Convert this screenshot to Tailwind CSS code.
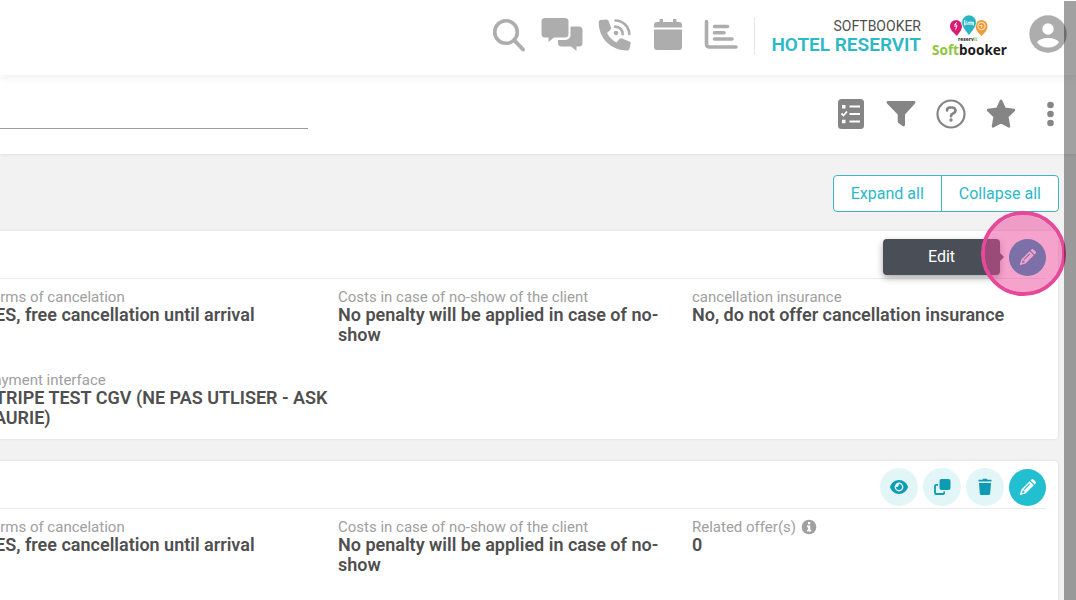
<!DOCTYPE html>
<html lang="en">
<head>
  <meta charset="UTF-8" />
  <meta name="viewport" content="width=device-width, initial-scale=1.0" />
  <title>Softbooker - Hotel Reservit</title>
  <script src="https://cdn.jsdelivr.net/npm/@tailwindcss/browser@4"></script>
</head>
<body class="relative h-screen overflow-hidden bg-[#f2f2f2] font-['Roboto',sans-serif] text-[#4f4f4f]">

  <!-- Icons used more than once -->
  <svg class="hidden">
    <symbol id="pencil" viewBox="0 0 20 20">
      <path fill="currentColor" fill-rule="evenodd" d="M12.3 3.4 3.6 12.1 2 17.4q-.2.8.6.6l5.300-1.600 8.700-8.700zM5 13l1.500.4.5 1.700-2.800.9zM12 5.900l.8.8-6 6-.8-.8zM13.200 2.500l1-1q1-.9 2 0l2.300 2.300q.9 1 0 2l-1 1z" />
    </symbol>
  </svg>

  <header class="relative z-10 flex h-[75px] items-center justify-end bg-white pr-[9px] pb-[3px] shadow-[0_1px_10px_rgba(0,0,0,0.09)]">
    <nav class="flex text-[#adadad]">
      <button aria-label="Search" class="flex w-[53px] justify-center">
        <svg class="h-9 w-9" viewBox="0 0 36 36" fill="none" stroke="currentColor" stroke-linecap="round">
          <circle cx="15" cy="14" r="11.300" stroke-width="3.600" />
          <path d="M23.500 22.500 32 31.500" stroke-width="4" />
        </svg>
      </button>
      <button aria-label="Messages" class="flex w-[53px] justify-center">
        <svg class="h-9 w-[42px]" viewBox="0 0 42 36" fill="currentColor">
          <path d="M4 0H24a3.500 3.500 0 0 1 3.500 3.500V16a3.500 3.500 0 0 1-3.500 3.500H13L7.500 24V19.500H4A3.500 3.500 0 0 1 .5 16V3.500A3.500 3.500 0 0 1 4 0z" />
          <path d="M29.500 8.500H38a3.500 3.500 0 0 1 3.500 3.500V25a3.500 3.500 0 0 1-3.500 3.500H35.500V33L30 28.500H20.500A3.500 3.500 0 0 1 17 25V22H24.500a5 5 0 0 0 5-5z" />
        </svg>
      </button>
      <button aria-label="Calls" class="flex w-[53px] justify-center">
        <svg class="h-9 w-[34px]" viewBox="0 0 34 36" fill="currentColor">
          <path d="M2.300 2 8.500 1.500Q10 1.500 10.600 3L13 9.500Q13.500 11 12.300 12L9 15Q12 21 18.500 24.500L21.500 21Q22.500 20 24 20.500L31.500 23.500Q33 24.200 32.700 25.800L31.300 31Q30.800 32.500 29 32.500C13 32.500.5 20 .7 4Q.7 2.300 2.300 2z" />
          <circle cx="18" cy="15" r="2.300" />
          <path d="M17 8.600A7.500 7.500 0 0 1 24.700 16.300M17.500 2.500A14 14 0 0 1 31.300 16" fill="none" stroke="currentColor" stroke-width="2.600" stroke-linecap="round" />
        </svg>
      </button>
      <button aria-label="Calendar" class="flex w-[53px] justify-center">
        <svg class="h-9 w-[30px]" viewBox="0 0 30 36" fill="currentColor">
          <path d="M6.500 2q0-1 1-1H9q1 0 1 1V4H20V2q0-1 1-1h1.500q1 0 1 1V4H26q3 0 3 3v2.500H1V7q0-3 3-3h2.500zM1 11.500H29V29q0 3-3 3H4q-3 0-3-3z" />
        </svg>
      </button>
      <button aria-label="Statistics" class="flex w-[53px] justify-center">
        <svg class="h-9 w-[34px]" viewBox="0 0 34 36" fill="none" stroke="currentColor" stroke-width="3.600" stroke-linecap="round">
          <path d="M2.500 3.500V26q0 3 3 3H32M10.500 8.500H23.500M10.500 14.700H20M10.500 21H28" />
        </svg>
      </button>
    </nav>

    <div class="ml-[7px] h-[38px] w-px bg-[#e5e5e5]"></div>

    <div class="ml-4 text-right">
      <div class="text-[14px] leading-[18px]">SOFTBOOKER</div>
      <div class="text-[19px] leading-[20px] font-semibold text-[#2cb9c6]">HOTEL RESERVIT</div>
    </div>

    <a href="#" class="ml-[11px]" aria-label="Softbooker">
      <svg class="h-[44px] w-[76px]" viewBox="0 0 76 44">
        <path fill="#d81b73" d="M24 6a6 6 0 0 1 6 6c0 4-3 7-5 10-3-3-7-6-7-10a6 6 0 0 1 6-6z" />
        <path fill="#f29a38" d="M49.500 6a6 6 0 0 1 6 6c0 4-3 7-6 10-3-3-6-6-6-10a6 6 0 0 1 6-6z" />
        <path fill="#2bb5c4" stroke="#fff" stroke-width=".6" d="M37 1a7.300 7.300 0 0 1 7.300 7.300c0 5-4.300 9-7.300 13.200-3-4.200-7.300-8.200-7.300-13.200A7.300 7.300 0 0 1 37 1z" />
        <path fill="none" stroke="#fff" d="M32.700 6v5.500M32.700 10h8.600M41.300 11.500V8.300H36M34 8h1.500M25 8.500l-2 1.500 2 1.500-1.500 4M23 10v3" />
        <circle cx="49.500" cy="12" r="3.700" fill="none" stroke="#fff" stroke-width=".8" />
        <path fill="none" stroke="#fff" stroke-width=".8" d="M47.500 11.500h2.300V14" />
        <text x="26" y="27" font-family="Open Sans" font-size="5" font-weight="700" fill="#222">reserv<tspan fill="#8cc63f">it</tspan></text>
        <text x="0" y="41" font-family="Noto Sans" font-size="13.500" font-weight="700" fill="#1d1d1b"><tspan fill="#8cc63f">Soft</tspan>booker</text>
      </svg>
    </a>

    <button aria-label="Account" class="ml-[21px]">
      <svg class="mb-1 h-[38px] w-[38px]" viewBox="0 0 38 38">
        <circle cx="19" cy="19" r="18.700" fill="#adadad" />
        <circle cx="19" cy="14" r="5.700" fill="#fff" />
        <path fill="#fff" d="M8 27.500Q10.500 23 19 23t11 4.500Q26 32.500 19 32.500T8 27.500z" />
      </svg>
    </button>
  </header>

  <div class="flex h-[79px] items-center justify-between bg-white pb-[2px] shadow-[0_1px_3px_rgba(0,0,0,0.08)]">
    <input type="text" aria-label="Search offers" class="mb-[23px] h-8 w-[308px] self-end border-b border-[#9d9d9d] outline-none" />
    <div class="flex text-[#858585]">
      <button aria-label="Checklist" class="flex w-[50px] justify-center">
        <svg class="h-8 w-8" viewBox="0 0 32 32">
          <rect x="3" y="1" width="26" height="30" rx="3.500" fill="currentColor" />
          <path fill="none" stroke="#fff" stroke-width="1.800" d="M14.500 8.500H25M14.500 16H25M14.500 23.500H25M6.500 15.500l2 2 3.500-4" />
          <path fill="#fff" d="M7 7h3.500v3.500H7zM7 21.700h3.500v3.500H7z" />
        </svg>
      </button>
      <button aria-label="Filter" class="flex w-[50px] justify-center">
        <svg class="h-8 w-8" viewBox="0 0 32 32" fill="currentColor">
          <path d="M3 3H29q2.300.5 1 2.500L20 16.500V27q-.5 2.300-2.500 1L13.500 25q-.8-.6-.8-1.500V16.500L2 5.500Q.7 3.500 3 3z" />
        </svg>
      </button>
      <button aria-label="Help" class="flex w-[50px] justify-center">
        <svg class="h-8 w-8" viewBox="0 0 32 32" fill="none" stroke="currentColor">
          <circle cx="16" cy="16" r="13.500" stroke-width="2.200" />
          <path d="M12 12.500Q12 9.500 15 9.500H17.500Q20.500 10 20.500 12.500 20.500 14.500 18 15.500 16 16.300 16 18.300" stroke-width="2.600" stroke-linecap="round" />
          <circle cx="16" cy="22" r="1.700" fill="currentColor" stroke="none" />
        </svg>
      </button>
      <button aria-label="Favourite" class="flex w-[50px] justify-center">
        <svg class="h-8 w-8" viewBox="0 0 32 32" fill="currentColor" stroke="currentColor" stroke-width="2.500" stroke-linejoin="round">
          <path d="M16 2.800 19.700 10.800 29 12 22.300 18.500 24 28.500 16 24.200 8 28.500 9.700 18.500 3 12 12.300 10.800z" />
        </svg>
      </button>
      <button aria-label="More" class="flex w-[50px] justify-center">
        <svg class="h-8 w-8" viewBox="0 0 32 32" fill="currentColor">
          <circle cx="15.500" cy="7" r="3.300" />
          <circle cx="15.500" cy="16" r="3.300" />
          <circle cx="15.500" cy="25" r="3.300" />
        </svg>
      </button>
    </div>
  </div>

  <main class="mr-[18px] -ml-7 pt-[21px]">
    <div class="mr-[-1px] flex justify-end text-[16px] leading-[20px] text-[#2cb9c6]">
      <button class="h-[37px] rounded-l border border-[#3db5c2] bg-white px-[17px]">Expand all</button>
      <button class="-ml-px h-[37px] rounded-r border border-[#3db5c2] bg-white px-[17px]">Collapse all</button>
    </div>

    <section class="mt-[19px] rounded bg-white px-3 pb-[11px] shadow-[0_0_3px_rgba(0,0,0,0.1)]">
      <div class="flex h-12 items-center justify-end border-b border-[#ebebeb] pt-[6px]">
        <div class="relative">
          <button aria-label="Edit" class="flex h-[37px] w-[37px] items-center justify-center rounded-full bg-[#0e98b7] text-white">
            <svg class="h-[19px] w-[19px]"><use href="#pencil" /></svg>
          </button>
          <div role="tooltip" class="absolute top-0 right-[46px] flex h-9 w-[117px] items-center justify-center rounded bg-[#4a4f57] text-[16px] text-white shadow-[0_3px_7px_rgba(0,0,0,0.35)]">
            Edit
            <span class="absolute top-[13px] -right-1 h-0 w-0 border-y-5 border-l-5 border-y-transparent border-l-[#4a4f57]"></span>
          </div>
          <!-- click highlight -->
          <div class="pointer-events-none absolute -top-[28px] -left-[28px] h-[85px] w-[85px] rounded-full border-4 border-[#e6489a] bg-[#ec4899]/50 bg-clip-padding"></div>
        </div>
      </div>
      <dl class="grid grid-cols-3 gap-y-[27px] pt-[10px]">
        <div class="pr-1">
          <dt class="text-[15px] leading-[16px] text-[#a0a0a0]">Terms of cancelation</dt>
          <dd class="text-[18px] leading-[20px] font-semibold">YES, free cancellation until arrival</dd>
        </div>
        <div class="pr-1">
          <dt class="text-[15px] leading-[16px] text-[#a0a0a0]">Costs in case of no-show of the client</dt>
          <dd class="text-[18px] leading-[20px] font-semibold">No penalty will be applied in case of no-show</dd>
        </div>
        <div class="pr-1">
          <dt class="text-[15px] leading-[16px] text-[#a0a0a0]">cancellation insurance</dt>
          <dd class="text-[18px] leading-[20px] font-semibold">No, do not offer cancellation insurance</dd>
        </div>
        <div class="pr-1">
          <dt class="text-[15px] leading-[16px] text-[#a0a0a0]">Payment interface</dt>
          <dd class="text-[18px] leading-[20px] font-semibold">STRIPE TEST CGV (NE PAS UTLISER - ASK LAURIE)</dd>
        </div>
      </dl>
    </section>

    <section class="mt-[22px] rounded bg-white px-3 pb-[11px] shadow-[0_0_3px_rgba(0,0,0,0.1)]">
      <div class="flex h-12 items-center justify-end gap-[5px] border-b border-[#ebebeb] pt-[5px] text-[#0f9bb4]">
        <button aria-label="View" class="flex h-[38px] w-[38px] items-center justify-center rounded-full bg-[#e2f6f8]">
          <svg class="h-5 w-5" viewBox="0 0 20 20">
            <path fill="currentColor" d="M10 3C5.500 3 2.300 6 1 10c1.300 4 4.500 7 9 7s7.700-3 9-7c-1.300-4-4.500-7-9-7z" />
            <circle cx="10" cy="10" r="4.400" fill="#e2f6f8" />
            <path fill="currentColor" d="M10 7a3 3 0 1 1-3 3q2.500.7 3-3z" />
          </svg>
        </button>
        <button aria-label="Duplicate" class="flex h-[38px] w-[38px] items-center justify-center rounded-full bg-[#e2f6f8]">
          <svg class="h-5 w-5" viewBox="0 0 20 20">
            <rect x="7.500" y="2" width="11" height="11" rx="2" fill="currentColor" />
            <path fill="none" stroke="currentColor" stroke-width="1.800" d="M6 7.800H4.200Q3 7.800 3 9v6.700Q3 17 4.200 17H11q1.200 0 1.200-1.300V14.500" />
          </svg>
        </button>
        <button aria-label="Delete" class="flex h-[38px] w-[38px] items-center justify-center rounded-full bg-[#e2f6f8]">
          <svg class="h-5 w-5" viewBox="0 0 20 20" fill="currentColor">
            <path d="M3.500 2.800H7.500L8.200 1.800h3.600l.7 1h4V4.600H3.500zM4 6H16l-.8 10.500q-.1 1.500-1.500 1.500H6.300q-1.400 0-1.500-1.500z" />
          </svg>
        </button>
        <button aria-label="Edit" class="flex h-[37px] w-[37px] items-center justify-center rounded-full bg-[#22bfd0] text-white">
          <svg class="h-[19px] w-[19px]"><use href="#pencil" /></svg>
        </button>
      </div>
      <dl class="grid grid-cols-3 gap-y-[27px] pt-[10px]">
        <div class="pr-1">
          <dt class="text-[15px] leading-[16px] text-[#a0a0a0]">Terms of cancelation</dt>
          <dd class="text-[18px] leading-[20px] font-semibold">YES, free cancellation until arrival</dd>
        </div>
        <div class="pr-1">
          <dt class="text-[15px] leading-[16px] text-[#a0a0a0]">Costs in case of no-show of the client</dt>
          <dd class="text-[18px] leading-[20px] font-semibold">No penalty will be applied in case of no-show</dd>
        </div>
        <div class="pr-1">
          <dt class="flex items-center gap-[5px] text-[15px] leading-[16px] text-[#a0a0a0]">
            Related offer(s)
            <svg class="h-4 w-4" viewBox="0 0 16 16">
              <circle cx="8" cy="8" r="7.300" fill="currentColor" />
              <path fill="#fff" d="M7 3h2.200v2.200H7zM6 6.500h3.200v4.300h1V12.500H6v-1.700h1V8.200H6z" />
            </svg>
          </dt>
          <dd class="text-[18px] leading-[20px] font-semibold">0</dd>
        </div>
      </dl>
      <div class="h-16"></div>
    </section>
  </main>

  <!-- scrollbar track -->
  <div class="absolute top-px right-0 bottom-0 z-20 w-3 bg-black/37"></div>
</body>
</html>
